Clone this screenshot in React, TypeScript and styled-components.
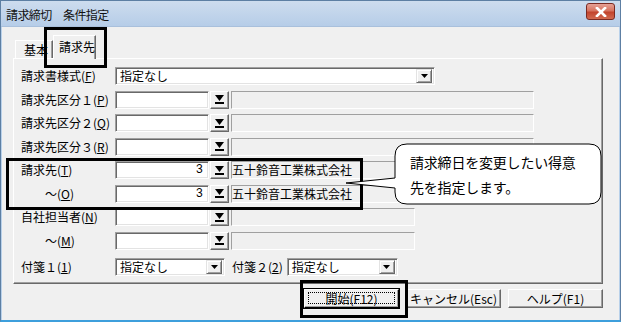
import React from "react";
import styled, { createGlobalStyle } from "styled-components";

const GlobalStyle = createGlobalStyle`
  html, body { margin: 0; padding: 0; background: #ffffff; }
  body { font-family: "Noto Sans CJK JP", "Noto Sans", sans-serif; font-size: 12px; color: #000; }
`;

const Window = styled.div`
  position: relative;
  width: 621px;
  height: 322px;
  box-sizing: border-box;
  background: #f0f0f0;
  border: 1px solid #5d7fa3;
  border-bottom: 2px solid #3d9fdc;
  box-shadow: inset 1px 0 #b9d1ea, inset -1px 0 #b9d1ea;
  display: flex;
  flex-direction: column;
  overflow: hidden;
`;

const TitleBar = styled.div`
  height: 26px;
  flex: none;
  display: flex;
  align-items: center;
  justify-content: space-between;
  padding: 0 5px 0 5px;
  background: linear-gradient(#cddcee, #b6cde8);
  border-bottom: 1px solid #a9c0dc;
  box-sizing: border-box;
`;

const Caption = styled.span`
  font-size: 12px;
  letter-spacing: -0.6px;
  line-height: 1;
  margin-top: 2px;
  color: #111;
`;

const CloseButton = styled.div`
  width: 29px;
  height: 17px;
  margin-top: -4px;
  border: 1px solid #7a2a22;
  border-radius: 3px;
  background: linear-gradient(#e6a196 0%, #d6735f 45%, #c2442d 55%, #d16a50 100%);
  display: flex;
  align-items: center;
  justify-content: center;
  box-sizing: border-box;
`;

const Body = styled.div`
  flex: 1;
  display: flex;
  flex-direction: column;
  padding: 8px 17px 0 12px;
`;

const TabStrip = styled.div`
  height: 23px;
  display: flex;
  align-items: flex-end;
  padding-left: 2px;
`;

const Tab = styled.div<{ $active?: boolean }>`
  box-sizing: border-box;
  height: ${(p) => (p.$active ? 24 : 18)}px;
  width: ${(p) => (p.$active ? 43 : 38)}px;
  padding: ${(p) => (p.$active ? "3px 0 0 5px" : "1px 0 0 8px")};
  line-height: 16px;
  background: #f0f0f0;
  border-top: 1px solid #ffffff;
  border-left: 1px solid #ffffff;
  border-right: 1px solid #696969;
  box-shadow: inset -1px 0 #a0a0a0;
  margin-bottom: ${(p) => (p.$active ? -1 : 0)}px;
  position: relative;
  z-index: ${(p) => (p.$active ? 2 : 1)};
`;

const Panel = styled.div`
  box-sizing: border-box;
  width: 590px;
  height: 226px;
  border-top: 1px solid #ffffff;
  border-left: 1px solid #ffffff;
  border-right: 1px solid #696969;
  border-bottom: 1px solid #696969;
  box-shadow: inset -1px -1px #a0a0a0;
  padding: 8px 0 0 7px;
  display: flex;
  flex-direction: column;
  gap: 5.5px;
`;

const Row = styled.div<{ $extra?: number }>`
  display: grid;
  grid-template-columns: 94px auto;
  align-items: center;
  height: 18px;
  margin-top: ${(p) => p.$extra ?? 0}px;
`;

const Label = styled.span<{ $indent?: number }>`
  padding-left: ${(p) => p.$indent ?? 0}px;
  line-height: 18px;
  white-space: nowrap;
`;

const Fields = styled.div`
  display: flex;
  align-items: center;
  height: 18px;
`;

const TextBox = styled.div<{ $w: number }>`
  box-sizing: border-box;
  width: ${(p) => p.$w}px;
  height: 18px;
  background: #ffffff;
  border-top: 1px solid #a0a0a0;
  border-left: 1px solid #a0a0a0;
  border-right: 1px solid #ffffff;
  border-bottom: 1px solid #ffffff;
  box-shadow: inset 1px 1px #696969, inset -1px -1px #e3e3e3;
  padding: 0 5px 0 4px;
  line-height: 16px;
  text-align: right;
  font-family: "Liberation Mono", monospace;
  font-size: 12px;
`;

const DropButton = styled.div`
  box-sizing: border-box;
  width: 19px;
  height: 18px;
  margin-left: 1px;
  background: #f0f0f0;
  border-top: 1px solid #ffffff;
  border-left: 1px solid #ffffff;
  border-right: 1px solid #696969;
  border-bottom: 1px solid #696969;
  box-shadow: inset -1px -1px #a0a0a0;
  display: flex;
  align-items: center;
  justify-content: center;
`;

const ReadOnly = styled.div<{ $w: number }>`
  box-sizing: border-box;
  width: ${(p) => p.$w}px;
  height: 18px;
  margin-left: 2px;
  border-top: 1px solid #a0a0a0;
  border-left: 1px solid #a0a0a0;
  border-right: 1px solid #ffffff;
  border-bottom: 1px solid #ffffff;
  line-height: 16px;
  white-space: nowrap;
  overflow: hidden;
`;

const Combo = styled.div<{ $w: number }>`
  box-sizing: border-box;
  width: ${(p) => p.$w}px;
  height: 18px;
  background: #ffffff;
  border-top: 1px solid #a0a0a0;
  border-left: 1px solid #a0a0a0;
  border-right: 1px solid #ffffff;
  border-bottom: 1px solid #ffffff;
  box-shadow: inset 1px 1px #696969, inset -1px -1px #e3e3e3;
  display: flex;
  align-items: center;
  justify-content: space-between;
  padding: 2px 2px 2px 4px;
`;

const ComboText = styled.span`
  line-height: 14px;
`;

const ComboArrow = styled.div`
  box-sizing: border-box;
  width: 16px;
  height: 14px;
  background: #f0f0f0;
  border-top: 1px solid #e3e3e3;
  border-left: 1px solid #e3e3e3;
  border-right: 1px solid #696969;
  border-bottom: 1px solid #696969;
  box-shadow: inset 1px 1px #fff, inset -1px -1px #a0a0a0;
  display: flex;
  align-items: center;
  justify-content: center;
`;

const InlineLabel = styled.span`
  margin: 0 4px 0 7px;
  white-space: nowrap;
`;

const ButtonBar = styled.div`
  display: flex;
  justify-content: flex-end;
  gap: 7px;
  margin-top: 5px;
`;

const PushButton = styled.div<{ $focus?: boolean }>`
  position: relative;
  box-sizing: border-box;
  width: 95px;
  height: 19px;
  background: #f0f0f0;
  border-top: 1px solid #ffffff;
  border-left: 1px solid #ffffff;
  border-right: 1px solid ${(p) => (p.$focus ? "#000" : "#696969")};
  border-bottom: 1px solid ${(p) => (p.$focus ? "#000" : "#696969")};
  box-shadow: inset -1px -1px #a0a0a0 ${(p) => (p.$focus ? ", 0 0 0 1px #000" : "")};
  display: flex;
  align-items: center;
  justify-content: center;
  line-height: 16px;
  white-space: nowrap;
`;

const FocusRing = styled.span`
  position: absolute;
  inset: 2px 3px 3px 3px;
  border: 1px dotted #000;
`;

const Highlight = styled.div<{ $x: number; $y: number; $w: number; $h: number }>`
  position: absolute;
  left: ${(p) => p.$x}px;
  top: ${(p) => p.$y}px;
  width: ${(p) => p.$w}px;
  height: ${(p) => p.$h}px;
  box-sizing: border-box;
  border: 3px solid #000;
  pointer-events: none;
  z-index: 5;
`;

const Callout = styled.div`
  position: absolute;
  left: 342px;
  top: 141px;
  width: 260px;
  height: 64px;
  z-index: 6;
`;

const CalloutText = styled.div`
  position: absolute;
  left: 67px;
  top: 8px;
  font-size: 14px;
  line-height: 25px;
  letter-spacing: -0.2px;
  white-space: nowrap;
`;

const DropGlyph = () => (
  <svg width="11" height="11" viewBox="0 0 11 11">
    <path d="M1 1 H10 L5.5 7 Z" fill="#000" />
    <rect x="1" y="8" width="9" height="2" fill="#000" />
  </svg>
);

const ArrowGlyph = () => (
  <svg width="7" height="4" viewBox="0 0 7 4">
    <path d="M0 0 H7 L3.5 4 Z" fill="#000" />
  </svg>
);

const Lookup = ({ value, name, roWidth = 303 }: { value?: string; name?: string; roWidth?: number }) => (
  <Fields>
    <TextBox $w={94}>{value}</TextBox>
    <DropButton>
      <DropGlyph />
    </DropButton>
    <ReadOnly $w={roWidth}>{name}</ReadOnly>
  </Fields>
);

export default function App() {
  const company = "五十鈴音工業株式会社";
  return (
    <>
      <GlobalStyle />
      <Window>
        <TitleBar>
          <Caption>請求締切　条件指定</Caption>
          <CloseButton>
            <svg width="12" height="10" viewBox="0 0 12 10">
              <path d="M2 1 L10 9 M10 1 L2 9" stroke="#fff" strokeWidth="2.6" strokeLinecap="square" />
            </svg>
          </CloseButton>
        </TitleBar>
        <Body>
          <TabStrip>
            <Tab>基本</Tab>
            <Tab $active>請求先</Tab>
          </TabStrip>
          <Panel>
            <Row>
              <Label>請求書様式(<u>F</u>)</Label>
              <Fields>
                <Combo $w={320}>
                  <ComboText>指定なし</ComboText>
                  <ComboArrow>
                    <ArrowGlyph />
                  </ComboArrow>
                </Combo>
              </Fields>
            </Row>
            <Row>
              <Label>請求先区分１(<u>P</u>)</Label>
              <Lookup />
            </Row>
            <Row>
              <Label>請求先区分２(<u>Q</u>)</Label>
              <Lookup />
            </Row>
            <Row>
              <Label>請求先区分３(<u>R</u>)</Label>
              <Lookup />
            </Row>
            <Row>
              <Label>請求先(<u>T</u>)</Label>
              <Lookup value="3" name={company} />
            </Row>
            <Row>
              <Label $indent={24}>～(<u>O</u>)</Label>
              <Lookup value="3" name={company} />
            </Row>
            <Row>
              <Label>自社担当者(<u>N</u>)</Label>
              <Lookup roWidth={184} />
            </Row>
            <Row>
              <Label $indent={24}>～(<u>M</u>)</Label>
              <Lookup roWidth={184} />
            </Row>
            <Row $extra={2.5}>
              <Label>付箋１(<u>1</u>)</Label>
              <Fields>
                <Combo $w={110}>
                  <ComboText>指定なし</ComboText>
                  <ComboArrow>
                    <ArrowGlyph />
                  </ComboArrow>
                </Combo>
                <InlineLabel>付箋２(<u>2</u>)</InlineLabel>
                <Combo $w={111}>
                  <ComboText>指定なし</ComboText>
                  <ComboArrow>
                    <ArrowGlyph />
                  </ComboArrow>
                </Combo>
              </Fields>
            </Row>
          </Panel>
          <ButtonBar>
            <PushButton $focus>
              <FocusRing />
              開始(F12)
            </PushButton>
            <PushButton>キャンセル(Esc)</PushButton>
            <PushButton>ヘルプ(F1)</PushButton>
          </ButtonBar>
        </Body>

        <Highlight $x={43} $y={26} $w={63} $h={41} />
        <Highlight $x={5} $y={157} $w={357} $h={52} />
        <Highlight $x={299} $y={279} $w={108} $h={38} />

        <Callout>
          <svg width="260" height="64" viewBox="0 0 260 64">
            <path
              d="M64 2 H246 Q258 2 258 14 V50 Q258 62 246 62 H64 Q52 62 52 50 V46 L3 41 L52 36 V14 Q52 2 64 2 Z"
              fill="#ffffff"
              stroke="#000"
              strokeWidth="1"
            />
          </svg>
          <CalloutText>
            請求締日を変更したい得意
            <br />
            先を指定します。
          </CalloutText>
        </Callout>
      </Window>
    </>
  );
}
